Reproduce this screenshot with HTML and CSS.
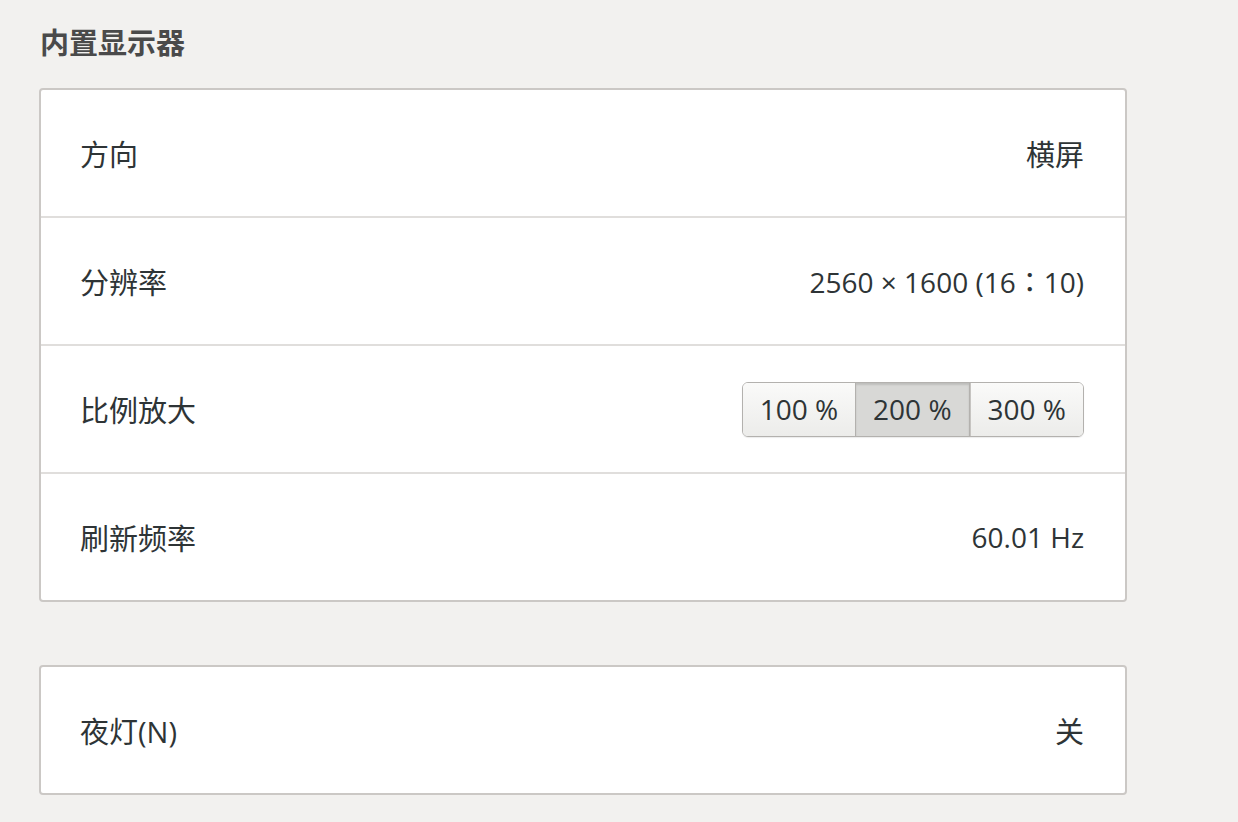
FILE: index.html
```html
<!DOCTYPE html>
<html lang="zh-CN">
<head>
<meta charset="utf-8">
<title>显示器</title>
<link rel="stylesheet" href="styles.css">
</head>
<body>
<main class="page">
  <h2 class="section-title">内置显示器</h2>
  <section class="card">
    <div class="row">
      <span class="label">方向</span>
      <span class="value cjk">横屏</span>
    </div>
    <div class="row">
      <span class="label">分辨率</span>
      <span class="value">2560 × 1600 (16<span class="ratio-colon">：</span>10)</span>
    </div>
    <div class="row">
      <span class="label">比例放大</span>
      <div class="seg">
        <button class="seg-btn">100 %</button>
        <button class="seg-btn active">200 %</button>
        <button class="seg-btn">300 %</button>
      </div>
    </div>
    <div class="row">
      <span class="label">刷新频率</span>
      <span class="value">60.01 Hz</span>
    </div>
  </section>
  <section class="card card-second">
    <div class="row">
      <span class="label">夜灯(N)</span>
      <span class="value cjk">关</span>
    </div>
  </section>
</main>
</body>
</html>
```
FILE: styles.css
```css
html, body {
  margin: 0;
  padding: 0;
  background: #f2f1ef;
}
body {
  font-family: "Open Sans", "Noto Sans CJK SC", sans-serif;
  color: #2e3436;
}
.page {
  width: 1088px;
  padding: 24px 0 0 39px;
}
.section-title {
  margin: 0 0 26px 1px;
  font-size: 29px;
  line-height: 38px;
  font-weight: bold;
  color: #4a4a4a;
}
.card {
  background: #ffffff;
  border: 2px solid #cbc8c5;
  border-radius: 4px;
  box-sizing: border-box;
}
.card-second {
  margin-top: 63px;
}
.row {
  display: flex;
  align-items: center;
  justify-content: space-between;
  height: 126px;
  padding: 0 41px 0 39px;
  border-top: 2px solid #e0dedc;
}
.row:first-child {
  border-top: none;
}
.label {
  font-size: 29px;
}
.value {
  font-size: 28px;
}
.value.cjk {
  font-size: 29px;
}
.ratio-colon {
  font-family: "Noto Sans CJK TC", sans-serif;
}
.seg {
  display: flex;
  height: 53px;
  border: 1px solid #b3b1ae;
  border-radius: 6px;
  overflow: hidden;
  box-shadow: 0 1px 1px rgba(0,0,0,0.08);
}
.seg-btn {
  font-family: inherit;
  font-size: 28px;
  color: #2e3436;
  border: none;
  border-left: 1px solid #c6c4c1;
  background: linear-gradient(#fafaf9, #ececea);
  padding: 0 17px;
  height: 100%;
}
.seg-btn:first-child {
  border-left: none;
}
.seg-btn.active {
  background: #d8d8d6;
  box-shadow: inset 0 2px 2px rgba(0,0,0,0.12);
  border-left-color: #b3b1ae;
  border-right: 1px solid #b3b1ae;
}
```
